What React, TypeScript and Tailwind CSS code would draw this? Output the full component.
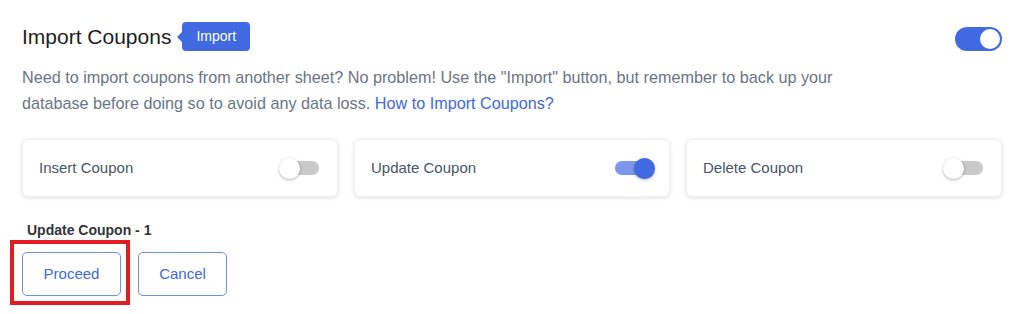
import { useState } from 'react'

function SmallSwitch({ on }: { on: boolean }) {
    return (
        <div className="relative h-[21px] w-[44px]">
            <span
                className={`absolute inset-x-[4px] top-1/2 h-[14px] -translate-y-1/2 rounded-full ${
                    on ? 'bg-[#7b96ea]' : 'bg-[#c9c9c9]'
                }`}
            ></span>
            <span
                className={`absolute top-0 h-[21px] w-[21px] rounded-full shadow-[0_1px_3px_rgba(0,0,0,0.3)] ${
                    on ? 'right-0 bg-[#4169e1]' : 'left-0 bg-white'
                }`}
            ></span>
        </div>
    )
}

export default function App() {
    const [options] = useState([
        { label: 'Insert Coupon', on: false },
        { label: 'Update Coupon', on: true },
        { label: 'Delete Coupon', on: false },
    ])

    return (
        <div className="min-h-[314px] bg-white px-[22px] pt-[22px] font-['Liberation_Sans',Arial,sans-serif]">
            {/* Header */}
            <div className="flex items-start justify-between">
                <div className="flex h-[29px] items-center">
                    <h1 className="text-[21px] leading-none text-[#1e1e1e]">Import Coupons</h1>
                    <span className="relative ml-[11px] flex h-[29px] items-center rounded-[4px] bg-[#4169e1] px-[14px] text-[14px] text-white">
                        <span className="absolute -left-[5px] top-1/2 h-0 w-0 -translate-y-1/2 border-y-[6px] border-r-[6px] border-y-transparent border-r-[#4169e1]"></span>
                        Import
                    </span>
                </div>
                <div className="mt-[5px] flex h-6 w-[47px] items-center justify-end rounded-full bg-[#4169e1] p-[2px]">
                    <span className="h-5 w-5 rounded-full bg-white"></span>
                </div>
            </div>

            {/* Description */}
            <p className="mt-[13px] max-w-[840px] text-[16.2px] leading-[26px] text-[#6b7584]">
                Need to import coupons from another sheet? No problem! Use the "Import" button, but remember to back up your database before doing so to avoid any data loss.{' '}
                <a href="#" className="text-[#4169e1]">How to Import Coupons?</a>
            </p>

            {/* Options */}
            <div className="mt-[23px] grid grid-cols-3 gap-4">
                {options.map((opt) => (
                    <div
                        key={opt.label}
                        className="flex h-[58px] items-center justify-between rounded-[6px] border border-[#eef0f3] bg-white pl-4 pr-[14px] shadow-[0_1px_4px_rgba(0,0,0,0.12)]"
                    >
                        <span className="text-[15px] text-[#4b5563]">{opt.label}</span>
                        <SmallSwitch on={opt.on} />
                    </div>
                ))}
            </div>

            {/* Summary */}
            <p className="mt-[23px] pl-[5px] text-[14px] font-bold leading-5 text-[#333]">Update Coupon - 1</p>

            <div className="mt-3 flex gap-[17px]">
                <div className="relative">
                    <button className="h-11 w-[99px] rounded-[5px] border border-[#6d8ff0] bg-white text-[15px] text-[#4169e1]">
                        Proceed
                    </button>
                    <span className="pointer-events-none absolute -bottom-[9px] -left-3 -right-[9px] -top-3 border-4 border-[#e31b23]"></span>
                </div>
                <button className="h-11 w-[89px] rounded-[5px] border border-[#6d8ff0] bg-white text-[15px] text-[#4169e1]">
                    Cancel
                </button>
            </div>
        </div>
    )
}
